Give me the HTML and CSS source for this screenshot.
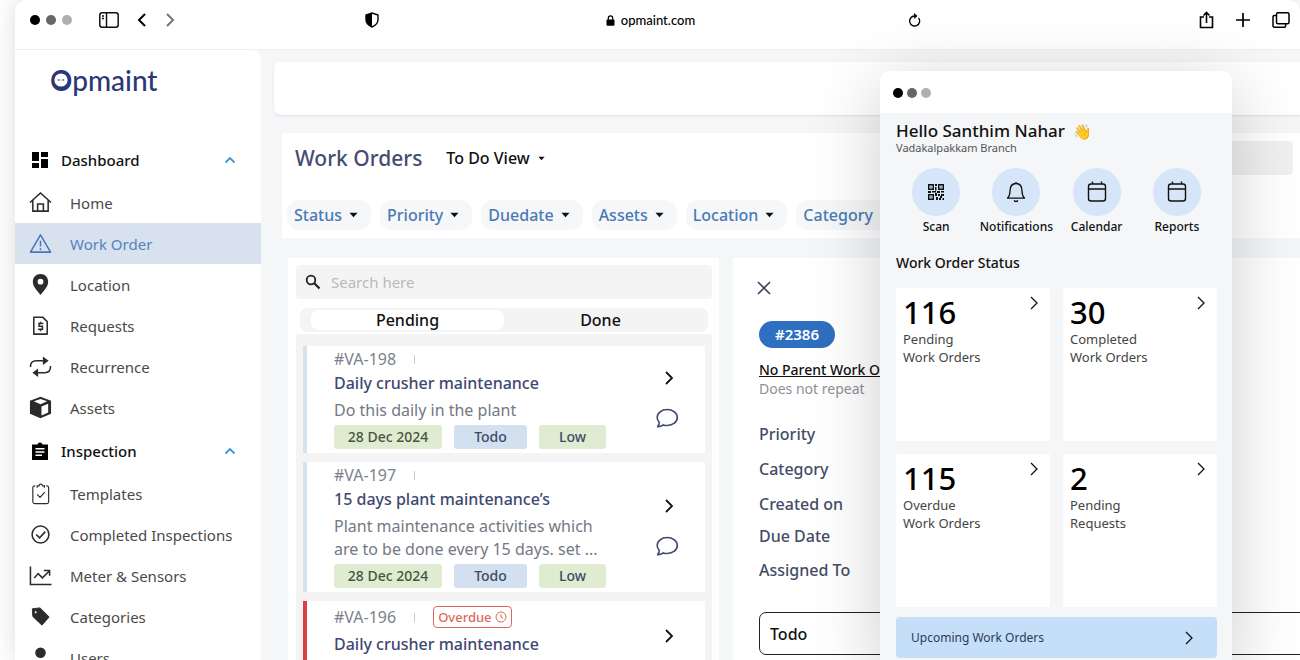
FILE: index.html
```html
<!DOCTYPE html>
<html lang="en">
<head>
<meta charset="utf-8">
<title>Opmaint – Work Orders</title>
<meta name="viewport" content="width=device-width, initial-scale=1">
<link rel="stylesheet" href="styles.css">
</head>
<body>
<svg class="defs" aria-hidden="true">
  <symbol id="chev-right" viewBox="0 0 16 16"><path d="M5 2l6 6-6 6" fill="none" stroke="currentColor" stroke-width="1.8"/></symbol>
  <symbol id="chev-thin" viewBox="0 0 16 16"><path d="M5 2l6 6-6 6" fill="none" stroke="currentColor" stroke-width="1.3"/></symbol>
  <symbol id="chev-up" viewBox="0 0 12 12"><path d="M1.500 8.500L6 4l4.500 4.500" fill="none" stroke="currentColor" stroke-width="1.800"/></symbol>
  <symbol id="caret" viewBox="0 0 10 6"><path d="M0.500 0.500h9L5 5.500z" fill="currentColor"/></symbol>
  <symbol id="comment" viewBox="0 0 24 24"><path d="M2.500 20.800c1.300-1.300 1.900-2.900 1.700-4.600C2.900 14.900 2.200 13.300 2.200 11.500 2.200 7 6.600 3.500 12.200 3.500S22.300 7 22.300 11.500s-4.400 8-10.100 8c-1.400 0-2.700-.2-3.900-.6-1.500 1.200-3.500 1.900-5.800 1.900z" fill="none" stroke="currentColor" stroke-width="1.600" stroke-linejoin="round"/></symbol>
  <symbol id="calendar" viewBox="0 0 24 24"><rect x="3.500" y="4" width="17" height="17" rx="2.500" fill="none" stroke="currentColor" stroke-width="1.400"/><path d="M3.500 9h17M7.500 1.500V4M16.500 1.500V4" stroke="currentColor" stroke-width="1.400"/></symbol>
</svg>

<div class="window">
  <header class="toolbar">
    <div class="toolbar-left">
      <span class="dots"><i></i><i></i><i></i></span>
      <button class="icon-btn" aria-label="Toggle sidebar"><svg width="20" height="16" viewBox="0 0 20 16" fill="none" stroke="#111" stroke-width="1.500"><rect x=".8" y=".8" width="18.400" height="14.400" rx="2.500"/><path d="M7.500 1v14M3 4h2M3 6.500h2"/></svg></button>
      <button class="icon-btn" aria-label="Back"><svg width="10" height="14" viewBox="0 0 10 14"><path d="M8 1L2 7l6 6" fill="none" stroke="#000" stroke-width="2"/></svg></button>
      <button class="icon-btn" aria-label="Forward"><svg width="10" height="14" viewBox="0 0 10 14"><path d="M2 1l6 6-6 6" fill="none" stroke="#777" stroke-width="2"/></svg></button>
    </div>
    <div class="toolbar-center">
      <svg width="14" height="16" viewBox="0 0 14 16"><path d="M7 1l6 2v4.500c0 3.500-2.500 6-6 7.500-3.500-1.500-6-4-6-7.500V3z" fill="none" stroke="#000" stroke-width="1.400"/><path d="M7 1v14c-3.500-1.500-6-4-6-7.500V3z"/></svg>
      <span class="address"><svg width="9" height="11" viewBox="0 0 9 11"><rect x=".5" y="4.500" width="8" height="6.200" rx="1"/><path d="M2.300 5V3a2.200 2.200 0 014.400 0v2" fill="none" stroke="#000" stroke-width="1.200"/></svg>opmaint.com</span>
      <button class="icon-btn" aria-label="Reload"><svg width="13" height="14" viewBox="0 0 13 14" fill="none" stroke="#000" stroke-width="1.300"><path d="M10.500 4.800a5 5 0 11-4-1.800h1.800M6 .8L8.500 3 6 5.400"/></svg></button>
    </div>
    <div class="toolbar-right">
      <button class="icon-btn" aria-label="Share"><svg width="15" height="18" viewBox="0 0 15 18" fill="none" stroke="#000" stroke-width="1.600"><path d="M5 6H1.500v10.500h12V6H10M7.500 12V1.500M4.500 4.500l3-3 3 3"/></svg></button>
      <button class="icon-btn" aria-label="New tab"><svg width="16" height="16" viewBox="0 0 16 16"><path d="M8 1v14M1 8h14" stroke="#000" stroke-width="1.700"/></svg></button>
      <button class="icon-btn" aria-label="Show tabs"><svg width="18" height="16" viewBox="0 0 18 16" fill="none" stroke="#000" stroke-width="1.500"><rect x="4.500" y=".8" width="12.500" height="11" rx="1.500"/><path d="M4.500 3.500H2.300A1.300 1.300 0 001 4.800v9a1.300 1.300 0 001.300 1.400h10a1.300 1.300 0 001.300-1.300v-2"/></svg></button>
    </div>
  </header>

  <div class="app">
    <nav class="sidebar">
      <a class="logo" href="#">Opmaint<svg class="logo-face" width="20" height="20" viewBox="0 0 20 20"><circle cx="10" cy="10" r="8" fill="#fff" stroke="#2c3777" stroke-width="2.800"/><circle cx="7.500" cy="10" r=".8" fill="#2c3777"/><circle cx="12.500" cy="10" r=".8" fill="#2c3777"/><path d="M7.500 10h5" stroke="#7d84ad" stroke-width=".6"/></svg></a>
      <section class="group">
        <button class="group-head"><svg class="gi" viewBox="0 0 18 18"><path d="M1 1h7v9H1zM10 1h7v5h-7zM1 12h7v5H1zM10 8h7v9h-7z"/></svg><span>Dashboard</span><svg class="up"><use href="#chev-up"/></svg></button>
        <ul>
          <li><a href="#"><svg viewBox="0 0 24 24" class="ln"><path d="M1 12L12 2l11 10M4 9.500V21h16V9.500M9 21v-7.500h6V21"/></svg>Home</a></li>
          <li><a href="#" class="active"><svg viewBox="0 0 24 24" class="ln"><path d="M12 3L1.500 21h21z" stroke-linejoin="round"/><path d="M12 9v6M12 17v2"/></svg>Work Order</a></li>
          <li><a href="#"><svg viewBox="0 0 24 24"><path fill-rule="evenodd" d="M12 1c-4.600 0-8 3.500-8 8 0 5.500 5 9.500 8 14 3-4.500 8-8.500 8-14 0-4.500-3.400-8-8-8zm0 5a3 3 0 110 6 3 3 0 010-6z"/></svg>Location</a></li>
          <li><a href="#"><svg viewBox="0 0 24 24" class="ln"><path d="M5 3.500h9.500L19 8v13H5z" stroke-linejoin="round"/><path d="M15 9.800h-4.500v3h3.500v3.200H9.500M12 8v2M12 16v2"/></svg>Requests</a></li>
          <li><a href="#"><svg viewBox="0 0 24 24" class="ln"><path d="M1.500 12.500c0-4.500 2-6.500 6-6.500H16M22.500 11.500c0 4.500-2 7-6 7H8"/><path d="M14.500 1.500l6 4.500-6 4.500zM9.500 14l-6 4.500 6 4.500z" fill="currentColor" stroke="none"/></svg>Recurrence</a></li>
          <li><a href="#"><svg viewBox="0 0 24 24"><path fill-rule="evenodd" d="M12 .8L23 5v13.500L12 23.300 1 18.500V5zM12 3L5 5.600l7 2.900 7-2.900zM13 11v9.300l7-3.100V8.200z"/></svg>Assets</a></li>
        </ul>
      </section>
      <section class="group">
        <button class="group-head"><svg class="gi" viewBox="0 0 18 18"><path fill-rule="evenodd" d="M1 2.500h5.500a2.600 2.600 0 015 0H17V18H1zM4.500 6v1.500h9V6zm0 3.200v1.500h9V9.200zm0 3.300V14H11v-1.500z"/></svg><span>Inspection</span><svg class="up"><use href="#chev-up"/></svg></button>
        <ul>
          <li><a href="#"><svg viewBox="0 0 24 24" class="ln thin"><path d="M6.500 4H6a2 2 0 00-2 2v14.500a2 2 0 002 2h12.500a2 2 0 002-2V6a2 2 0 00-2-2H18M8.500 6V4h2a1.800 1.800 0 013.600 0h2v2M8.500 13l3 3 5-5.500"/></svg>Templates</a></li>
          <li><a href="#"><svg viewBox="0 0 24 24" class="ln"><circle cx="12" cy="12" r="8.800"/><path d="M7.500 12l3.500 3.500L17 9"/></svg>Completed Inspections</a></li>
          <li><a href="#"><svg viewBox="0 0 24 24" class="ln"><path d="M1.500 2.500v19h22M5.500 14.500l4-4.500 4.500 4.500L21 7.500M15.500 6.800h6v5.500"/></svg>Meter &amp; Sensors</a></li>
          <li><a href="#"><svg viewBox="0 0 24 24"><path fill-rule="evenodd" d="M3.500 4L11.500 3 21 12.500 13.500 21 4 12zM7 6a1.500 1.500 0 100 3 1.500 1.500 0 000-3z" stroke="currentColor" stroke-linejoin="round"/></svg>Categories</a></li>
          <li><a href="#"><svg viewBox="0 0 24 24"><circle cx="12" cy="7" r="5.500"/><path d="M2 23c0-5.500 4-8.500 10-8.500s10 3 10 8.500z"/></svg>Users</a></li>
        </ul>
      </section>
    </nav>

    <main class="main">
      <div class="topbar"></div>
      <section class="heading">
        <div class="title-row">
          <h1>Work Orders</h1>
          <button class="view">To Do View <svg class="caret-sm"><use href="#caret"/></svg></button>
          <span class="placeholder"></span>
        </div>
        <div class="filters">
          <button>Status<svg><use href="#caret"/></svg></button>
          <button>Priority<svg><use href="#caret"/></svg></button>
          <button>Duedate<svg><use href="#caret"/></svg></button>
          <button>Assets<svg><use href="#caret"/></svg></button>
          <button>Location<svg><use href="#caret"/></svg></button>
          <button>Category<svg><use href="#caret"/></svg></button>
        </div>
      </section>

      <div class="columns">
        <section class="list">
          <label class="search"><svg width="16" height="16" viewBox="0 0 16 16" fill="none" stroke="#222"><circle cx="6" cy="6" r="4.300" stroke-width="1.800"/><path d="M9.300 9.300L14.500 14.500" stroke-width="2.200"/></svg><input type="search" placeholder="Search here" aria-label="Search work orders"></label>
          <div class="tabs"><button class="on">Pending</button><button>Done</button></div>
          <div class="cards">
            <article class="card">
              <div class="card-body">
                <div class="id"><span>#VA-198</span><i></i></div>
                <h2>Daily crusher maintenance</h2>
                <p>Do this daily in the plant</p>
                <div class="tags"><span class="date">28 Dec 2024</span><span class="todo">Todo</span><span class="low">Low</span></div>
              </div>
              <div class="actions"><button class="icon-btn" aria-label="Open"><svg class="go"><use href="#chev-right"/></svg></button><button class="icon-btn" aria-label="Comments"><svg class="talk"><use href="#comment"/></svg></button></div>
            </article>
            <article class="card">
              <div class="card-body">
                <div class="id"><span>#VA-197</span><i></i></div>
                <h2>15 days plant maintenance’s</h2>
                <p>Plant maintenance activities which<br>are to be done every 15 days. set ...</p>
                <div class="tags"><span class="date">28 Dec 2024</span><span class="todo">Todo</span><span class="low">Low</span></div>
              </div>
              <div class="actions"><button class="icon-btn" aria-label="Open"><svg class="go"><use href="#chev-right"/></svg></button><button class="icon-btn" aria-label="Comments"><svg class="talk"><use href="#comment"/></svg></button></div>
            </article>
            <article class="card late">
              <div class="card-body">
                <div class="id"><span>#VA-196</span><i></i><b class="overdue">Overdue<svg width="12" height="12" viewBox="0 0 12 12" fill="none" stroke="currentColor"><circle cx="6" cy="6" r="5"/><path d="M6 3v3l2 1.500"/></svg></b></div>
                <h2>Daily crusher maintenance</h2>
              </div>
              <div class="actions"><button class="icon-btn" aria-label="Open"><svg class="go"><use href="#chev-right"/></svg></button><button class="icon-btn" aria-label="Comments"><svg class="talk"><use href="#comment"/></svg></button></div>
            </article>
          </div>
        </section>

        <section class="detail">
          <button class="icon-btn" aria-label="Close"><svg width="14" height="14" viewBox="0 0 14 14"><path d="M1 1l12 12M13 1L1 13" stroke="#3f4660" stroke-width="1.600"/></svg></button>
          <span class="number">#2386</span>
          <a class="parent" href="#">No Parent Work Order</a>
          <span class="repeat">Does not repeat</span>
          <ul class="fields">
            <li>Priority</li><li>Category</li><li>Created on</li><li class="tight">Due Date</li><li>Assigned To</li>
          </ul>
          <button class="status">Todo</button>
        </section>
      </div>
    </main>
  </div>
</div>

<aside class="phone">
  <div class="phone-top"><span class="dots"><i></i><i></i><i></i></span></div>
  <div class="phone-body">
    <h2 class="hello">Hello Santhim Nahar <span class="wave">👋</span></h2>
    <p class="branch">Vadakalpakkam Branch</p>
    <div class="shortcuts">
      <button><span class="disc"><svg width="18" height="18" viewBox="0 0 18 18" fill="#111"><path fill-rule="evenodd" d="M1 1h6v6H1zM2.500 2.500v3h3v-3zM11 1h6v6h-6zM12.500 2.500v3h3v-3zM1 11h6v6H1zM2.500 12.500v3h3v-3z"/><path d="M3.500 3.500h1v1h-1zM13.500 3.500h1v1h-1zM3.500 13.500h1v1h-1zM8 1h2v2H8zM8 4h1.500v3.500H8zM1 8h3v2H1zM5 8h4v1.500H5zM8 10h2v3H8zM10 8h3v2h-3zM14 8h3v1.500h-3zM11 11h2v2h-2zM14 11h3v2h-2v2h-2v-2h1zM9 14h2v3H9zM12 15h2v2h-2zM15.500 15H17v2h-1.500z"/></svg></span>Scan</button>
      <button><span class="disc"><svg width="20" height="22" viewBox="0 0 20 22" fill="none" stroke="#111" stroke-width="1.300"><path d="M10 1v1.500M1.500 17.200c1.800-1.800 2.500-4 2.500-7.200 0-4.500 2.300-7.500 6-7.500s6 3 6 7.500c0 3.200.7 5.400 2.500 7.200z" stroke-linejoin="round"/><path d="M8 19.500q2 2 4 0"/></svg></span>Notifications</button>
      <button><span class="disc"><svg class="cal"><use href="#calendar"/></svg></span>Calendar</button>
      <button><span class="disc"><svg class="cal"><use href="#calendar"/></svg></span>Reports</button>
    </div>
    <h3>Work Order Status</h3>
    <div class="stats">
      <a href="#"><strong>116</strong><span>Pending<br>Work Orders</span><svg><use href="#chev-thin"/></svg></a>
      <a href="#"><strong>30</strong><span>Completed<br>Work Orders</span><svg><use href="#chev-thin"/></svg></a>
      <a href="#"><strong>115</strong><span>Overdue<br>Work Orders</span><svg><use href="#chev-thin"/></svg></a>
      <a href="#"><strong>2</strong><span>Pending<br>Requests</span><svg><use href="#chev-thin"/></svg></a>
    </div>
    <button class="upcoming">Upcoming Work Orders<svg><use href="#chev-thin"/></svg></button>
  </div>
</aside>
</body>
</html>
```
FILE: styles.css
```css
* { box-sizing: border-box; }
body {
  margin: 0;
  height: 100vh;
  overflow: hidden;
  position: relative;
  background: #fff;
  color: #111;
  font-family: "Noto Sans", "Open Sans", sans-serif;
}
h1, h2, h3, p, ul { margin: 0; padding: 0; }
ul { list-style: none; }
a { color: inherit; text-decoration: none; }
button { font: inherit; color: inherit; background: none; border: 0; padding: 0; }
svg { display: block; flex: none; }
.defs { position: absolute; width: 0; height: 0; }
.icon-btn { display: flex; }

.window {
  margin-left: 15px;
  height: 100%;
  display: flex;
  flex-direction: column;
  background: #fff;
  border-radius: 12px 12px 0 0;
  overflow: hidden;
  box-shadow: 0 0 24px rgba(0, 0, 0, .14);
}
.toolbar {
  flex: none;
  height: 50px;
  padding-bottom: 9px;
  display: grid;
  grid-template-columns: 1fr 2fr 1fr;
  align-items: center;
  border-bottom: 1px solid #eceeef;
}
.toolbar-left, .toolbar-right, .toolbar-center, .address { display: flex; align-items: center; }
.toolbar-left { padding-left: 15px; gap: 18px; }
.toolbar-left .dots { margin-right: 9px; }
.toolbar-center { justify-content: space-between; padding: 0 58px 0 29px; }
.address { gap: 6px; margin-left: 14px; font: 500 13px Lato, sans-serif; color: #000; }
.toolbar-right { justify-content: flex-end; gap: 21px; padding-right: 10px; }
.dots { display: flex; gap: 6px; }
.dots i { width: 10px; height: 10px; border-radius: 50%; background: #000; }
.dots i:nth-child(2) { background: #666; }
.dots i:nth-child(3) { background: #b0b0b0; }

.app { flex: 1; min-height: 0; display: flex; background: #f4f6f8; }
.sidebar { flex: none; width: 246px; background: #fff; border-top-right-radius: 10px; overflow: hidden; }
.logo {
  position: relative;
  display: block;
  height: 88px;
  padding: 13px 0 0 35px;
  font: 500 28px/34px Lato, sans-serif;
  color: #2c3777;
}
.logo-face { position: absolute; left: 36px; top: 20px; }
.group { padding-bottom: 1px; }
.group ul { padding-top: 1px; }
.group-head {
  width: 100%;
  height: 43px;
  padding: 0 25px 0 16px;
  display: flex;
  align-items: center;
  gap: 12px;
  font-size: 15px;
  font-weight: 500;
  text-align: left;
}
.group-head span { flex: 1; }
.gi { width: 18px; height: 18px; }
.up { width: 12px; height: 12px; color: #3d94d6; }
.group a {
  height: 41px;
  padding-left: 14px;
  display: flex;
  align-items: center;
  gap: 18px;
  font-size: 15px;
  color: #4a4a4a;
}
.group a svg { width: 23px; height: 23px; fill: #2b2b2b; color: #2b2b2b; }
.group a .ln { fill: none; stroke: currentColor; stroke-width: 1.6; }
.group a .thin { stroke-width: 1.2; }
.group a.active { background: #d7e2ee; color: #5583c2; }
.group a.active svg { color: #4577bd; }

.main { flex: 1; min-width: 0; padding: 12px 0 0 13px; display: flex; flex-direction: column; }
.topbar { flex: none; height: 53px; background: #fff; border-radius: 6px 0 0 6px; box-shadow: 0 1px 2px rgba(0, 0, 0, .1); }
.heading { margin: 18px 0 0 8px; padding: 8px 7px 8px 5px; background: #fff; }
.title-row { display: flex; align-items: center; height: 34px; padding-left: 8px; }
h1 { font-size: 21px; line-height: 34px; font-weight: 500; color: #454c73; }
.view { display: flex; align-items: center; gap: 8px; margin-left: 24px; font-size: 16px; font-weight: 500; }
.caret-sm { width: 7px; height: 5px; }
.placeholder { margin-left: auto; width: 30%; height: 34px; background: #f0f0f1; border-radius: 4px; }
.filters { display: flex; gap: 9px; margin-top: 25px; overflow: hidden; }
.filters button {
  flex: none;
  height: 30px;
  padding: 0 13px 0 7px;
  display: flex;
  align-items: center;
  gap: 7px;
  border-radius: 12px;
  background: #f5f7f9;
  color: #4a7ab5;
  font-size: 16px;
  font-weight: 500;
}
.filters svg { width: 9px; height: 6px; color: #111; }

.columns { flex: 1; min-height: 0; display: flex; gap: 14px; margin: 20px 0 0 14px; }
.list { flex: none; width: 431px; padding: 7px 7px 0 8px; background: #fff; overflow: hidden; }
.search { height: 34px; display: flex; align-items: center; gap: 10px; padding: 0 9px; background: #f4f4f4; border-radius: 4px; }
.search input { flex: 1; min-width: 0; border: 0; padding: 0; background: none; outline: 0; font: 15px "Noto Sans", sans-serif; }
.search input::placeholder { color: #b9b9bd; opacity: 1; }
.tabs { margin: 9px 4px 2px; padding: 2px 11px; height: 24px; display: flex; background: #f4f4f4; border-radius: 6px; }
.tabs button { flex: 1; height: 20px; line-height: 20px; font-size: 16px; font-weight: 500; border-radius: 8px; }
.tabs .on { background: #fff; }
.cards { padding: 12px 7px; display: flex; flex-direction: column; gap: 9px; background: #f4f4f4; }
.card { display: flex; min-height: 107px; padding: 2px 26px 4px 27px; background: #fff; border-left: 4px solid #d3e2ef; }
.card.late { min-height: 113px; border-color: #dc4040; }
.card-body { flex: 1; min-width: 0; }
.id { display: flex; align-items: center; min-height: 22px; font-size: 16px; line-height: 22px; color: #7d818e; }
.id i { width: 1px; height: 9px; margin: 0 18px; background: #ccc; }
.late .id { min-height: 28px; }
.overdue {
  display: flex;
  align-items: center;
  gap: 3px;
  height: 22px;
  padding: 0 4px;
  border: 1px solid #e0675f;
  border-radius: 4px;
  color: #e0675f;
  font-size: 13px;
  font-weight: 500;
}
.card h2 { font-size: 16px; line-height: 26px; font-weight: 500; color: #3f4870; }
.card p { margin: 3px 0; font-size: 16px; line-height: 23px; color: #747884; white-space: nowrap; }
.tags { display: flex; gap: 12px; }
.tags span { height: 24px; padding: 0 11px; line-height: 24px; text-align: center; border-radius: 3px; font-size: 14px; font-weight: 500; color: #3d4a68; background: #e0ecd1; }
.tags .date { color: #47553f; min-width: 108px; }
.tags .todo { min-width: 73px; background: #d3e0ef; }
.tags .low { min-width: 67px; }
.actions { width: 24px; padding-top: 3px; display: flex; flex-direction: column; align-items: center; justify-content: center; gap: 20px; }
.go { width: 16px; height: 16px; margin-left: 4px; }
.talk { width: 24px; height: 24px; color: #3f4870; }

.detail { flex: 1; min-width: 0; padding: 23px 0 0 26px; background: #fff; display: flex; flex-direction: column; align-items: flex-start; color: #454c66; }
.detail .icon-btn { margin-left: -2px; }
.number { margin-top: 26px; height: 27px; padding: 0 16px; border-radius: 14px; background: #2f6fc1; color: #fff; font-size: 15px; line-height: 27px; font-weight: 600; }
.parent { margin-top: 12px; font-size: 14px; line-height: 20px; font-weight: 500; color: #111; text-decoration: underline; }
.repeat { font-size: 14px; line-height: 17px; color: #8d9197; }
.fields { margin-top: 20px; font-size: 16px; font-weight: 500; line-height: 35px; }
.fields .tight { line-height: 29px; }
.fields li:last-child { line-height: 39px; }
.status { flex: none; align-self: stretch; margin-top: 22px; margin-right: -8px; height: 43px; padding: 0 10px; border: 1px solid #222; border-radius: 7px; text-align: left; font-size: 16px; font-weight: 500; color: #111; }

/* Mobile app preview floating over the desktop view */
.phone {
  position: absolute;
  top: 71px;
  right: 68px;
  width: 352px;
  background: #f4f6f8;
  border-radius: 10px 10px 0 0;
  box-shadow: 0 14px 70px rgba(0, 0, 0, .2);
}
.phone-top { height: 42px; padding: 17px 13px; background: #fff; border-radius: 10px 10px 0 0; }
.phone-top .dots { gap: 4px; }
.phone-body { padding: 7px 15px 16px 16px; }
.hello { display: flex; align-items: center; gap: 8px; font-size: 17px; line-height: 22px; font-weight: 500; }
.wave { font-size: 15px; }
.branch { font-size: 11px; line-height: 12px; color: #555; }
.shortcuts { display: grid; grid-template-columns: repeat(4, 1fr); margin-top: 14px; }
.shortcuts button { display: flex; flex-direction: column; align-items: center; gap: 2px; font-size: 12px; line-height: 17px; font-weight: 500; }
.disc { width: 48px; height: 48px; border-radius: 50%; background: #d6e5f7; display: grid; place-items: center; }
.cal { width: 24px; height: 24px; }
.phone h3 { margin: 18px 0 15px; font-size: 14px; line-height: 20px; font-weight: 500; }
.stats { display: grid; grid-template-columns: 1fr 1fr; gap: 13px; }
.stats a { position: relative; min-height: 153px; padding: 7px; background: #fff; border-radius: 2px; }
.stats strong { display: block; font-size: 31px; line-height: 35px; font-weight: 500; color: #000; }
.stats span { display: block; font-size: 13px; line-height: 18px; color: #444; }
.stats svg { position: absolute; top: 7px; right: 8px; width: 16px; height: 16px; color: #111; }
.upcoming { width: 100%; height: 41px; margin-top: 10px; padding: 0 20px 0 15px; display: flex; align-items: center; justify-content: space-between; border-radius: 4px; background: #c5dff8; font-size: 12px; color: #2a3b55; }
.upcoming svg { width: 16px; height: 16px; color: #111; }
```
